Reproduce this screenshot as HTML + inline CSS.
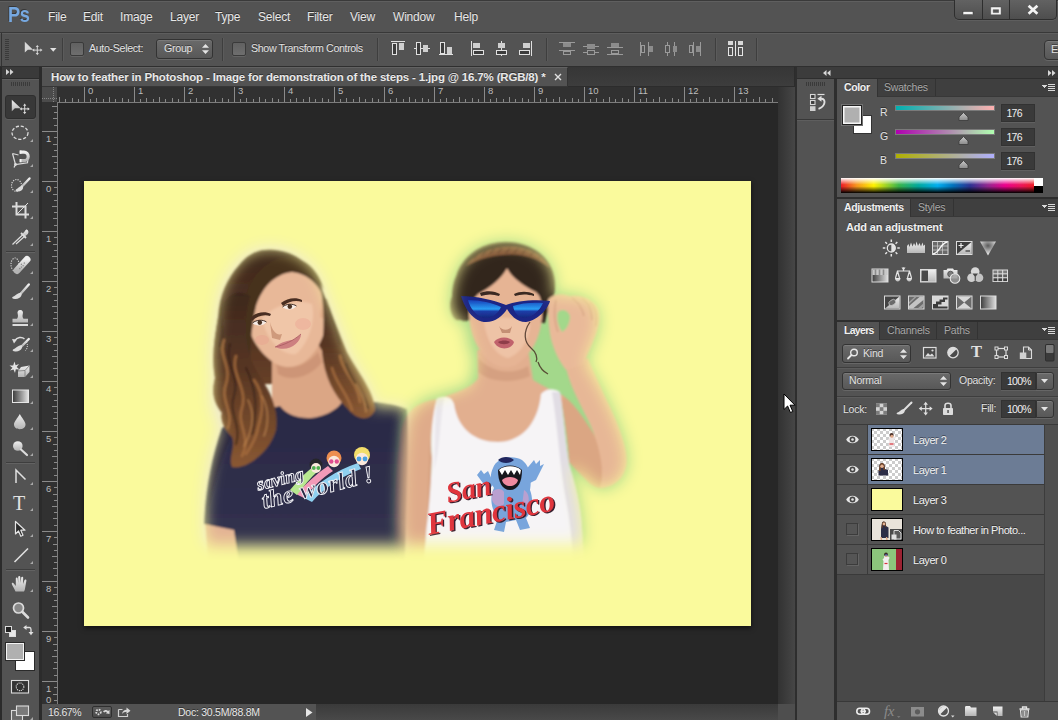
<!DOCTYPE html>
<html lang="en">
<head>
<meta charset="utf-8">
<title>Photoshop</title>
<style>
*{box-sizing:border-box;margin:0;padding:0}
html,body{width:1058px;height:720px;overflow:hidden;background:#535353}
body{font-family:"Liberation Sans",sans-serif;font-size:11px;color:#e2e2e2;position:relative}
.a{position:absolute}
.t{position:absolute;white-space:nowrap;line-height:1;text-shadow:0 -1px 0 rgba(0,0,0,.45)}
svg{position:absolute;overflow:visible}
/* ---------- menu bar ---------- */
#menubar{left:0;top:0;width:1058px;height:33px;background:#535353;border-top:1px solid #3a3a3a;border-bottom:1px solid #383838}
#menubar .hl{left:0;top:0;width:1058px;height:1px;background:#5f5f5f}
.menu{font-size:12px;top:11px;color:#e8e8e8;letter-spacing:-.2px}
/* ---------- options bar ---------- */
#optbar{left:0;top:33px;width:1058px;height:34px;background:#535353;border-top:1px solid #5e5e5e;border-bottom:1px solid #2f2f2f}
.vsep{width:1px;background:#3e3e3e;box-shadow:1px 0 0 #5b5b5b}
.chk{width:13px;height:13px;border:1px solid #3a3a3a;border-radius:2px;background:linear-gradient(#616161,#6e6e6e);box-shadow:0 1px 0 #646464}
/* ---------- doc area ---------- */
#tabbar{left:42px;top:67px;width:753px;height:20px;background:linear-gradient(#363636,#3d3d3d);border-bottom:1px solid #2c2c2c;border-right:1px solid #2c2c2c}
#doctab{left:42px;top:67px;width:526px;height:20px;background:#535353;border-right:1px solid #333;border-top:1px solid #626262;border-bottom:1px solid #363636}
#canvas{left:57px;top:102px;width:721px;height:602px;background:#272727}
#hruler{left:57px;top:87px;width:721px;height:16px;background:#313131;border-bottom:1px solid #7c7c7c}
#vruler{left:42px;top:102px;width:16px;height:602px;background:#313131;border-right:1px solid #7c7c7c}
#rcorner{left:42px;top:87px;width:15px;height:15px;background:#4b4b4b}
.rn{position:absolute;font-size:9.5px;color:#bcbcbc;line-height:1}
#vscroll{left:778px;top:87px;width:17px;height:617px;background:linear-gradient(90deg,#323232,#464646)}
#hscroll{left:316px;top:704px;width:462px;height:16px;background:linear-gradient(#3a3a3a,#494949)}
#scorner{left:778px;top:704px;width:17px;height:16px;background:#4e4e4e}
#status{left:42px;top:704px;width:274px;height:16px;background:#535353}
/* ---------- toolbar ---------- */
#tools{left:0;top:67px;width:42px;height:653px;background:#2b2b2b}
#toolhead{left:2px;top:67px;width:37px;height:11px;background:#3a3a3a}
#toolbody{left:2px;top:79px;width:37px;height:641px;background:#535353;border-top:1px solid #5e5e5e}
/* ---------- right column ---------- */
#rgap{left:795px;top:67px;width:263px;height:653px;background:#2e2e2e}
#rhead{left:797px;top:67px;width:261px;height:11px;background:#3c3c3c}
#iconcol{left:797px;top:79px;width:37px;height:641px;background:#535353}
.panel{background:#535353}
.tabrow{background:#3f3f3f;border-bottom:1px solid #383838}
.ptab{position:absolute;top:0;height:17px;font-size:10.5px;letter-spacing:-.2px;line-height:16px;padding:0 7px;color:#a8a8a8;border-right:1px solid #333;text-shadow:0 -1px 0 rgba(0,0,0,.4)}
.ptab.on{background:#535353;color:#f0f0f0;font-weight:bold;height:18px;letter-spacing:-.35px}
.vbox{position:absolute;background:#3a3a3a;border:1px solid #323232;box-shadow:0 1px 0 #606060;color:#f0f0f0;font-size:10.5px;letter-spacing:-.75px;line-height:16px;padding-left:6px}
.dd{position:absolute;border:1px solid #333;border-radius:3px;background:linear-gradient(#6a6a6a,#585858);box-shadow:0 1px 0 #666,inset 0 1px 0 #7a7a7a;color:#f0f0f0;font-size:11px}
</style>
</head>
<body>
<!-- MENU BAR -->
<div id="menubar" class="a"><div class="a hl"></div></div>
<div class="t" style="left:8px;top:4px;font-size:22px;font-weight:bold;color:#76a8e0;letter-spacing:-.3px;text-shadow:-1px -1px 0 rgba(0,0,0,.35);transform:scaleX(.825);transform-origin:left">Ps</div>
<div class="t menu" style="left:48px">File</div>
<div class="t menu" style="left:83px">Edit</div>
<div class="t menu" style="left:120px">Image</div>
<div class="t menu" style="left:170px">Layer</div>
<div class="t menu" style="left:215px">Type</div>
<div class="t menu" style="left:258px">Select</div>
<div class="t menu" style="left:307px">Filter</div>
<div class="t menu" style="left:350px">View</div>
<div class="t menu" style="left:393px">Window</div>
<div class="t menu" style="left:454px">Help</div>
<div class="a" style="left:954px;top:0;width:103px;height:20px;border:1px solid #2e2e2e;border-top:none;border-radius:0 0 5px 5px;background:linear-gradient(#626262,#4e4e4e);box-shadow:0 1px 0 #5e5e5e"></div>
<div class="a" style="left:982px;top:0;width:1px;height:19px;background:#2e2e2e"></div>
<div class="a" style="left:1009px;top:0;width:1px;height:19px;background:#2e2e2e"></div>
<svg style="left:954px;top:0" width="103" height="20" viewBox="954 0 103 20"><rect x="963" y="11.500" width="10" height="3.200" fill="#f4f4f4" stroke="#333" stroke-width=".5"/><path d="M990.700 7H1001.100V14.800H990.700ZM993.200 9.700V12.600H998.600V9.700Z" fill="#f4f4f4" fill-rule="evenodd" stroke="#333" stroke-width=".4"/><path d="M1028.600 5.800L1037.400 13.800M1037.400 5.800L1028.600 13.800" stroke="#f4f4f4" stroke-width="2.700" fill="none"/></svg>

<!-- OPTIONS BAR -->
<div id="optbar" class="a"></div>
<div class="a" style="left:1px;top:33px;width:1px;height:33px;background:#333"></div>
<svg style="left:5px;top:39px" width="5" height="22" shape-rendering="crispEdges"><path d="M0 .5H4M0 2.500H4M0 4.500H4M0 6.500H4M0 8.500H4M0 10.500H4M0 12.500H4M0 14.500H4M0 16.500H4M0 18.500H4M0 20.500H4" stroke="#3a3a3a" stroke-width="1"/></svg>
<svg style="left:24px;top:40px" width="20" height="17" viewBox="24 40 20 17"><path d="M24.800 41.800L24.800 52.600L27.800 49.800L33 49.800Z" fill="#d8d8d8"/><path d="M37.300 46.500V53.700M33.700 50.100H40.900" stroke="#d6d6d6" stroke-width="1" fill="none"/><path d="M37.300 44.900L38.900 47.100H35.700ZM37.300 55.300L38.900 53.100H35.700ZM32.100 50.100L34.300 48.500V51.700ZM42.500 50.100L40.300 48.500V51.700Z" fill="#d6d6d6"/></svg>
<svg style="left:50px;top:48px" width="7" height="4"><path d="M0 0H6.500L3.250 3.800Z" fill="#e0e0e0"/></svg>
<div class="a vsep" style="left:62px;top:38px;height:23px"></div>
<div class="a chk" style="left:70px;top:42px;width:14px;height:14px"></div>
<div class="t" style="left:89px;top:43px;font-size:10.7px;letter-spacing:-.35px">Auto-Select:</div>
<div class="dd" style="left:156px;top:39px;width:57px;height:20px"></div>
<div class="t" style="left:164px;top:43px;font-size:10.7px;letter-spacing:-.3px">Group</div>
<svg style="left:202px;top:44px" width="7" height="10"><path d="M0 3.800L3.500 0L7 3.800ZM0 6.200L3.500 10L7 6.200Z" fill="#e4e4e4"/></svg>
<div class="a vsep" style="left:222px;top:38px;height:23px"></div>
<div class="a chk" style="left:232px;top:42px;width:14px;height:14px"></div>
<div class="t" style="left:251px;top:43px;font-size:10.7px;letter-spacing:-.38px">Show Transform Controls</div>
<div class="a vsep" style="left:377px;top:38px;height:23px"></div>
<!-- align icons -->
<svg style="left:391px;top:41px" width="145" height="15" viewBox="391 41 145 15" shape-rendering="crispEdges" fill="#3c3c3c" stroke="#e0e0e0" stroke-width="1">
<path d="M391 41.500H405"/><rect x="392.500" y="43.500" width="4" height="11"/><rect x="399" y="43" width="5" height="7" fill="#cfcfcf" stroke="none"/>
<path d="M414 48.500H430"/><rect x="416.500" y="42.500" width="4" height="12" fill="#3c3c3c"/><rect x="423" y="45" width="5" height="7" fill="#cfcfcf" stroke="none"/>
<path d="M439 54.500H453"/><rect x="440.500" y="42.500" width="4" height="11"/><rect x="447" y="47" width="5" height="7" fill="#cfcfcf" stroke="none"/>
<path d="M471.500 41V56"/><rect x="473" y="43" width="7" height="5" fill="#cfcfcf" stroke="none"/><rect x="473.500" y="50.500" width="10" height="4"/>
<path d="M501.500 41V56"/><rect x="498" y="43" width="7" height="5" fill="#cfcfcf" stroke="none"/><rect x="496.500" y="50.500" width="10" height="4" fill="#3c3c3c"/>
<path d="M531.500 41V56"/><rect x="523" y="43" width="7" height="5" fill="#cfcfcf" stroke="none"/><rect x="519.500" y="50.500" width="10" height="4"/>
</svg>
<div class="a vsep" style="left:546px;top:38px;height:23px"></div>
<svg style="left:559px;top:42px" width="145" height="14" viewBox="559 42 145 14" shape-rendering="crispEdges" fill="none" stroke="#9a9a9a" stroke-width="1">
<path d="M559 42.500H575M559 50.500H575"/><rect x="563" y="43" width="8" height="4" fill="#8c8c8c" stroke="none"/><rect x="563.500" y="51.500" width="7" height="3"/>
<path d="M583 46.500H599M583 52.500H599"/><rect x="587" y="44" width="8" height="5" fill="#8c8c8c" stroke="none"/><rect x="587.500" y="50.500" width="7" height="4" fill="#535353"/>
<path d="M607 47.500H623M607 54.500H623"/><rect x="611" y="43" width="8" height="4" fill="#8c8c8c" stroke="none"/><rect x="611.500" y="50.500" width="7" height="3"/>
<path d="M640.500 42V56M648.500 42V56"/><rect x="641.500" y="45.500" width="3" height="7"/><rect x="649" y="46" width="4" height="6" fill="#8c8c8c" stroke="none"/>
<path d="M667.500 42V56M674.500 42V56"/><rect x="665.500" y="45.500" width="4" height="7" fill="#535353"/><rect x="673" y="46" width="4" height="6" fill="#8c8c8c" stroke="none"/>
<path d="M693.500 42V56M700.500 42V56"/><rect x="689.500" y="45.500" width="3" height="7"/><rect x="696" y="46" width="4" height="6" fill="#8c8c8c" stroke="none"/>
</svg>
<div class="a vsep" style="left:715px;top:38px;height:23px"></div>
<svg style="left:727px;top:40px" width="17" height="17" viewBox="0 0 17 17" shape-rendering="crispEdges"><rect x="1" y="1" width="5" height="4" fill="#d8d8d8"/><rect x="11" y="1" width="5" height="4" fill="#d8d8d8"/><rect x="1.500" y="7.500" width="4" height="8" fill="none" stroke="#e6e6e6"/><rect x="11.500" y="7.500" width="4" height="8" fill="none" stroke="#e6e6e6"/><path d="M8.500 1V16" stroke="#e6e6e6"/></svg>
<div class="a vsep" style="left:756px;top:38px;height:23px"></div>
<div class="dd" style="left:1044px;top:40px;width:20px;height:20px;border-radius:4px 0 0 4px"></div>
<div class="t" style="left:1051px;top:44px;font-size:11px">E</div>

<!-- DOCUMENT -->
<div id="tabbar" class="a"></div>
<div id="doctab" class="a"></div>
<div class="t" style="left:51px;top:72px;font-size:11.5px;font-weight:bold;color:#e8e8e8;letter-spacing:-.17px">How to feather in Photoshop - Image for demonstration of the steps - 1.jpg @ 16.7% (RGB/8) *</div>
<svg id="tabclose" style="left:554px;top:73px" width="8" height="8"><path d="M1 1L7 7M7 1L1 7" stroke="#e0e0e0" stroke-width="1.400"/></svg>
<div id="canvas" class="a"></div>
<svg class="a" style="left:84px;top:181px;overflow:hidden;box-shadow:0 2px 5px rgba(0,0,0,.6)" width="667" height="445" viewBox="84 181 667 445">
<defs>
<filter id="b9" x="-20%" y="-20%" width="140%" height="140%"><feGaussianBlur stdDeviation="7.5"/></filter>
<filter id="b3" x="-20%" y="-20%" width="140%" height="140%"><feGaussianBlur stdDeviation="3"/></filter>
<filter id="b1" x="-20%" y="-20%" width="140%" height="140%"><feGaussianBlur stdDeviation="1"/></filter>
<filter id="b05" x="-20%" y="-20%" width="140%" height="140%"><feGaussianBlur stdDeviation=".55"/></filter>
<mask id="m1" maskUnits="userSpaceOnUse" x="84" y="181" width="667" height="445">
<path filter="url(#b9)" fill="#fff" d="M262 248C292 244 318 263 325 292C333 312 342 334 348 352C358 372 374 390 375 408C385 404 398 405 407 409C410 440 408 500 405 545L206 545C201 510 207 460 220 428C209 410 210 390 213 378C209 356 213 336 216 317C217 296 225 276 237 263C245 254 252 250 262 248Z"/>
</mask>
<mask id="m2" maskUnits="userSpaceOnUse" x="84" y="181" width="667" height="445">
<path filter="url(#b9)" fill="#fff" d="M502 242C530 240 552 256 555 281C556 290 553 295 552 297C560 293 572 293 582 297C594 301 602 310 598 330C594 345 588 355 586 362C592 372 598 382 603 392C615 415 628 445 627 462C626 480 612 490 598 489C590 482 580 472 571 466C576 486 581 506 582 526L583 544L403 544C400 520 400 505 401 498C401 470 403 450 405 438C406 420 410 410 424 400C440 394 458 390 470 385L475 360C468 345 466 335 467 325C458 322 452 315 451 308C450 295 452 284 456 275C462 256 480 243 502 242Z"/>
</mask>
<linearGradient id="lens" x1="0" y1="0" x2="0" y2="1"><stop offset="0" stop-color="#173fb8"/><stop offset=".5" stop-color="#2aa0f4"/><stop offset=".62" stop-color="#1d3ea8"/><stop offset="1" stop-color="#17277e"/></linearGradient>
<linearGradient id="hairL" x1="0" y1="0" x2="0" y2="1"><stop offset="0" stop-color="#3d281e"/><stop offset=".45" stop-color="#583623"/><stop offset="1" stop-color="#8a5832"/></linearGradient>
<linearGradient id="shirtF" x1="0" y1="0" x2="0" y2="1"><stop offset="0" stop-color="#2a2944"/><stop offset="1" stop-color="#323250"/></linearGradient>
</defs>
<rect x="84" y="181" width="667" height="445" fill="#fafa9c"/>
<!-- ===== left woman (front) ===== -->
<g mask="url(#m1)">
<rect x="190" y="225" width="230" height="350" fill="#efe9d4"/>
<g filter="url(#b1)">
<!-- hair back mass -->
<path fill="url(#hairL)" d="M262 250C290 246 316 264 323 292C331 312 340 334 346 352C356 372 372 392 372 410C366 420 356 416 350 406C344 396 338 390 332 384L262 384C262 400 268 420 262 436C256 452 240 470 232 466C228 456 236 446 232 436C224 428 220 420 222 412C212 400 212 390 215 378C211 356 215 336 218 317C219 296 227 278 239 265C246 256 253 252 262 250Z"/>
<!-- arm below sleeve -->
<path fill="#e3b394" d="M205 522L234 528L238 560L208 560Z"/>
<!-- neck -->
<path fill="#dba685" d="M272 352L318 344L350 398C334 426 290 428 272 408Z"/>
<path fill="#c78f70" opacity=".7" d="M276 362C290 372 306 366 318 352L322 362C310 378 290 382 278 374Z"/>
<!-- shirt -->
<path fill="url(#shirtF)" d="M280 406C262 410 236 418 222 428C210 460 205 496 204 524L234 530L238 560L405 560C407 500 410 440 407 409C394 404 380 402 372 402C362 398 352 398 344 398C340 410 322 418 308 418C296 418 286 414 280 406Z"/>
<path fill="#22213a" opacity=".7" d="M222 428C214 450 210 480 208 510C216 480 222 455 232 436ZM400 412C404 440 404 480 402 520L405 520C407 480 409 440 407 409Z"/>
<!-- face (tilted) -->
<path fill="#e8b898" d="M248 312C250 288 272 272 292 272C312 274 326 292 326 312C328 332 318 352 304 362C292 370 280 368 270 360C256 348 246 332 248 312Z"/>
<path fill="#f0c6a8" d="M262 318C272 306 298 298 312 304C316 322 308 344 296 354C282 356 266 340 262 318Z"/>
<!-- ear -->
<path fill="#dfa888" d="M322 300C328 298 330 306 328 314C326 320 322 320 320 316Z"/>
<!-- hair front (fringe sweep) -->
<path fill="#47301f" d="M244 318C242 290 256 266 280 258C300 254 318 266 324 290C318 278 306 272 292 272C274 274 262 288 256 306C252 324 250 344 250 364C244 350 244 334 244 318Z"/>
<!-- front locks -->
<path fill="url(#hairL)" d="M250 296C242 326 246 350 254 366C264 384 280 402 276 430C270 452 246 470 232 467C228 457 236 447 232 437C224 429 220 421 222 413C212 401 212 390 215 378C211 356 215 336 218 317C222 298 236 286 250 296Z"/>
<path fill="url(#hairL)" d="M320 286C330 310 340 334 347 352C358 372 375 392 375 410C369 423 356 419 348 409C334 396 324 376 322 352C324 330 325 308 320 286Z"/>
<!-- highlights / waves -->
<path fill="none" stroke="#a86e3e" stroke-width="2.600" stroke-linecap="round" opacity=".8" d="M224 340C218 356 232 366 226 384C220 400 234 412 228 428M236 356C230 374 248 388 242 408C236 424 252 438 242 456M254 380C266 396 262 414 258 428C256 440 250 448 246 454M340 356C342 372 358 382 360 402M332 368C336 384 348 394 352 410"/>
<path fill="none" stroke="#2e1d15" stroke-width="2.200" stroke-linecap="round" opacity=".6" d="M230 344C224 362 240 376 234 396C228 412 242 426 236 444M246 368C256 388 258 408 252 434M222 300C218 318 226 330 220 346M346 364C350 380 364 392 368 408M326 300C332 316 336 330 340 344"/>
<path fill="none" stroke="#c48a52" stroke-width="1.500" stroke-linecap="round" opacity=".7" d="M248 400C256 416 252 432 244 446M262 396C270 410 268 426 264 436M356 384C362 394 366 402 366 412"/>
</g>
<g filter="url(#b05)">
<!-- brows / eyes / nose / lips -->
<path fill="#4a2f22" d="M250 318C256 312 265 311 271 314L270 316C264 314 257 316 252 321ZM281 303C287 298 296 297 302 300L302 302C296 300 289 301 283 306Z"/>
<path fill="#f6ece6" d="M252.500 323C256.500 319.500 263 319.500 266.500 322C263 326.500 256 326.500 252.500 323ZM282.500 307C286.500 303.500 293 303.500 296.500 306C293 310.500 286 310.500 282.500 307Z"/><circle cx="259.800" cy="322.600" r="2.300" fill="#4a3020"/><circle cx="289.800" cy="306.600" r="2.300" fill="#4a3020"/><path fill="none" stroke="#2e1e18" stroke-width=".9" d="M252.500 323C256.500 319.500 263 319.500 266.500 322M282.500 307C286.500 303.500 293 303.500 296.500 306"/><ellipse cx="303" cy="324" rx="8" ry="6" fill="#e88f86" opacity=".28"/><ellipse cx="262" cy="340" rx="7" ry="5" fill="#e88f86" opacity=".25"/>
<path fill="#cf9a7c" d="M270 322C272 330 276 336 282 334L280 340L272 338Z"/>
<path fill="#cd7f80" d="M275 347C281 342 289 340 293 340C296 338 299 336 301 334C301 343 288 353 275 347Z"/><path fill="none" stroke="#a85a60" stroke-width=".8" d="M275 347C284 345 293 341 301 334"/>
<!-- print rainbow + characters -->
<path fill="#f29ab8" d="M296 494C306 484 316 474 328 466L333 471C322 478 312 488 304 498Z"/>
<path fill="#8fd0f0" d="M304 498C316 484 336 470 358 463L361 469C342 476 324 488 312 502Z"/>
<path fill="#b8e890" d="M290 490C298 480 306 472 314 466L318 471C310 478 304 486 297 495Z"/>
<circle cx="334" cy="458" r="7.500" fill="#ee8f50"/><circle cx="334" cy="461.500" r="5.800" fill="#fbe9dc"/><circle cx="331.300" cy="461.500" r="2.200" fill="#e05090"/><circle cx="336.800" cy="461.500" r="2.200" fill="#e05090"/>
<circle cx="362" cy="455" r="8" fill="#f3de6a"/><circle cx="362" cy="459" r="6.200" fill="#fbe9dc"/><circle cx="359" cy="459" r="2.400" fill="#4aa0e0"/><circle cx="365" cy="459" r="2.400" fill="#4aa0e0"/>
<circle cx="316" cy="465" r="6.500" fill="#26262c"/><circle cx="316" cy="468" r="5" fill="#fbe9dc"/><circle cx="313.800" cy="468" r="1.900" fill="#50b050"/><circle cx="318.300" cy="468" r="1.900" fill="#50b050"/>
</g>
<g font-family="'Liberation Serif',serif" font-style="italic" font-weight="bold" fill="#2a2944" stroke="#f4f4f8" stroke-width=".9" transform="rotate(-14 318 486)">
<text x="259" y="476" font-size="18">saving</text>
<text x="260" y="495" font-size="24" letter-spacing=".6">the world !</text>
</g>
</g>
<!-- ===== right woman (behind) ===== -->
<g mask="url(#m2)">
<rect x="380" y="220" width="290" height="360" fill="#a3d88b"/>
<g filter="url(#b1)">
<!-- her right arm (our left) -->
<path fill="#dfab8a" d="M438 399C418 401 404 410 400 434C395 470 393 510 394 560L430 560C430 510 431 480 432 458C430 440 432 420 438 399Z"/><path fill="#cf9877" opacity=".5" d="M430 440C428 470 428 520 427 560L430 560C430 510 431 480 432 458Z"/>
<!-- raised arm: upper arm + forearm -->
<path fill="#dba683" d="M560 394C572 400 584 418 596 438C608 456 618 468 612 482C604 492 596 488 590 484C582 476 574 468 569 462C568 440 564 415 560 394Z"/>
<path fill="#e7b796" d="M566 368L588 358C594 372 600 384 604 394C616 418 628 446 627 462C626 478 614 488 600 488C606 470 598 440 588 420C578 400 570 385 566 368Z"/>
<!-- neck/chest -->
<path fill="#e2af8f" d="M477 350L529 354L533 380C546 388 556 392 564 396L548 440C524 452 480 452 458 432L436 400C455 392 472 388 478 378Z"/>
<path fill="#d09a7b" opacity=".7" d="M478 358C490 372 512 376 528 366L530 376C512 384 490 382 478 372Z"/>
<!-- tank -->
<path fill="#f6f4f6" d="M437 398C446 395 452 397 454 404C458 430 476 442 498 442C520 442 538 425 541 394C546 388 554 388 560 392C564 420 566 445 569 464C576 486 581 506 582 526L584 560L424 560C426 540 426 530 427 524C430 500 431 480 432 458C430 440 432 415 437 398Z"/>
<path fill="#dad6de" opacity=".75" d="M552 392C558 430 560 470 566 500C570 520 572 540 573 560L584 560L582 526C581 506 576 486 569 464C566 445 564 420 560 392Z"/>
<path fill="#e6e2e8" opacity=".8" d="M437 398C434 420 436 450 434 470C440 450 440 420 444 398Z"/>
<!-- hair -->
<path fill="#33251f" d="M502 242C530 240 553 257 555 281C556 292 553 302 549 308C547 314 546 318 545 323L540 323C540 316 538 312 536 310L472 318C467 323 460 322 456 316C450 305 451 286 456 276C462 256 480 243 502 242Z"/>
<!-- face -->
<path fill="#e6b494" d="M470 302C472 284 494 268 510 268C532 270 544 294 542 318C540 340 530 356 516 365C502 371 489 364 481 352C471 338 467 320 470 302Z"/>
<path fill="#eec3a6" d="M484 322C492 316 520 316 530 324C530 340 520 354 508 358C496 356 486 340 484 322Z"/>
<!-- hair front sweeps -->
<path fill="#33251f" d="M507 268C502 278 490 288 478 294C474 298 472 302 470 306C464 296 464 282 470 272C480 260 496 257 507 268ZM507 268C512 278 524 286 536 292C540 296 542 300 544 306C550 294 548 280 542 272C532 260 518 257 507 268Z"/>
<path fill="#8b5b3c" opacity=".9" d="M466 266C476 251 498 245 516 247C532 249 544 256 550 268C538 258 524 254.500 512 254.500C496 254.500 480 258 466 266Z"/><path fill="none" stroke="#3a271e" stroke-width="1" opacity=".8" d="M474 259L478 254M482 256L486 251M490 254L494 249M498 253L502 248M506 253L510 248M514 253L518 248.500M522 254L526 249.500M530 256L534 251.500M538 259L542 255"/>
<path fill="#33251f" d="M452 296C458 290 466 294 466 304C466 314 462 322 456 320C450 316 448 304 452 296Z"/>
<!-- hand -->
<path fill="#e9b999" d="M548 300C552 294 562 293 570 296C580 294 592 298 598 308C602 318 598 330 594 340C590 350 586 358 584 364L566 370C558 360 552 346 550 334C548 322 548 310 548 300Z"/>
<path fill="#a3d88b" d="M558 312C562 308 568 310 570 316C570 324 566 330 562 332C558 326 556 318 558 312Z"/><path fill="none" stroke="#c48e70" stroke-width="1" opacity=".8" d="M572 298C578 302 582 308 584 316M582 298C590 304 592 312 592 320M590 302C596 308 598 316 596 326M556 300C554 310 554 322 558 332"/>
</g>
<g filter="url(#b05)">
<!-- loose strand -->
<path fill="none" stroke="#4a3428" stroke-width="1.300" opacity=".85" d="M530 322C523 332 524 342 531 348C536 352 538 358 536 362M538 362C540 368 544 372 548 374"/>
<!-- sunglasses -->
<path fill="#1b2585" d="M461 296C476 296 494 300 506 305C516 301 534 299 550 301C549 306 540 320 526 322C516 322 510 314 507 309C503 316 494 323 484 322C471 320 464 306 461 296Z"/>
<path fill="url(#lens)" d="M468 300C480 300 493 303 501 307C498 314 491 319 484 318C476 316 470 308 468 300ZM513 306C521 303 533 302 543 303C540 310 533 317 525 318C518 318 514 312 513 306Z"/>
<!-- brows, nose, lips -->
<path fill="#3a2a22" d="M480 293C487 290 495 291 500 294L499 296C493 294 487 294 481 296ZM514 294C520 291 528 291 534 294L534 296C527 294 521 294 515 296Z"/>
<path fill="#c48f74" d="M499 326C502 331 509 331 512 326L510 333L502 333Z"/>
<path fill="#c0626c" d="M494 342C498 336 510 336 514 342C512 350 498 351 494 342Z"/>
<path fill="#8e3c48" d="M498 342C502 340 507 340 510 342C508 345 500 345 498 342Z"/>
</g>
<!-- print: Stitch -->
<g filter="url(#b05)" transform="translate(0 2)">
<path fill="#78a5dc" d="M493 466C496 456 512 452 522 458C530 464 532 476 530 488C534 498 532 510 526 516L530 526L520 528L516 518L506 520L504 530L494 528L498 516C490 506 490 494 494 486C490 480 490 472 493 466Z"/>
<path fill="#78a5dc" d="M477 473L481 468L484 472L488 469L494 482L488 488ZM524 470L534 458L536 462L540 458L540 464L544 462L536 478L528 482Z"/>
<path fill="#b9a0d0" d="M492 490C496 486 502 486 504 490L504 502C500 506 494 504 492 498ZM524 488C528 490 530 496 528 502L522 504Z"/>
<path fill="#20285e" d="M498 458C502 454 510 454 514 458C510 462 502 462 498 458Z"/>
<path fill="#16161e" d="M498 468C504 462 516 462 522 468C522 480 518 488 510 488C502 488 498 480 498 468Z"/>
<path fill="#fff" d="M499 468L502 473L505 468L508 473L511 468L514 473L517 468L520 473L521 468C516 463 504 463 499 468Z"/>
<path fill="#ef8aa0" d="M502 478C506 474 514 474 518 478C516 486 504 486 502 478Z"/>
</g>
<g font-family="'Liberation Serif',serif" font-style="italic" font-weight="bold" transform="rotate(-11 490 515)">
<text x="452.200" y="496.200" font-size="29" fill="#3a2030" letter-spacing="-.5">San</text>
<text x="451" y="495" font-size="29" fill="#e0353d" letter-spacing="-.5">San</text>
<text x="427.200" y="524.200" font-size="32" fill="#3a2030" letter-spacing="-.4">Francisco</text>
<text x="426" y="523" font-size="32" fill="#e0353d" letter-spacing="-.4">Francisco</text>
</g>
</g>
</svg>

<div id="hruler" class="a"></div>
<div id="vruler" class="a"></div>
<div id="rcorner" class="a"></div>
<svg class="a" style="left:57px;top:87px" width="721" height="16" viewBox="57 87 721 16" shape-rendering="crispEdges"><path d="M59.5 97V102M65.5 99V102M72.5 98V102M78.5 99V102M84.5 87V102M90.5 99V102M96.5 98V102M103.5 99V102M109.5 97V102M115.5 99V102M122.5 98V102M128.5 99V102M134.5 87V102M140.5 99V102M146.5 98V102M153.5 99V102M159.5 97V102M165.5 99V102M172.5 98V102M178.5 99V102M184.5 87V102M190.5 99V102M196.5 98V102M203.5 99V102M209.5 97V102M215.5 99V102M222.5 98V102M228.5 99V102M234.5 87V102M240.5 99V102M246.5 98V102M253.5 99V102M259.5 97V102M265.5 99V102M272.5 98V102M278.5 99V102M284.5 87V102M290.5 99V102M296.5 98V102M303.5 99V102M309.5 97V102M315.5 99V102M322.5 98V102M328.5 99V102M334.5 87V102M340.5 99V102M346.5 98V102M353.5 99V102M359.5 97V102M365.5 99V102M372.5 98V102M378.5 99V102M384.5 87V102M390.5 99V102M396.5 98V102M403.5 99V102M409.5 97V102M415.5 99V102M422.5 98V102M428.5 99V102M434.5 87V102M440.5 99V102M446.5 98V102M453.5 99V102M459.5 97V102M465.5 99V102M472.5 98V102M478.5 99V102M484.5 87V102M490.5 99V102M496.5 98V102M503.5 99V102M509.5 97V102M515.5 99V102M522.5 98V102M528.5 99V102M534.5 87V102M540.5 99V102M546.5 98V102M553.5 99V102M559.5 97V102M565.5 99V102M572.5 98V102M578.5 99V102M584.5 87V102M590.5 99V102M596.5 98V102M603.5 99V102M609.5 97V102M615.5 99V102M622.5 98V102M628.5 99V102M634.5 87V102M640.5 99V102M646.5 98V102M653.5 99V102M659.5 97V102M665.5 99V102M672.5 98V102M678.5 99V102M684.5 87V102M690.5 99V102M696.5 98V102M703.5 99V102M709.5 97V102M715.5 99V102M722.5 98V102M728.5 99V102M734.5 87V102M740.5 99V102M746.5 98V102M753.5 99V102M759.5 97V102M765.5 99V102M772.5 98V102" stroke="#8a8a8a" stroke-width="1" fill="none"/></svg>
<div class="rn" style="left:88px;top:86px">0</div>
<div class="rn" style="left:138px;top:86px">1</div>
<div class="rn" style="left:188px;top:86px">2</div>
<div class="rn" style="left:238px;top:86px">3</div>
<div class="rn" style="left:288px;top:86px">4</div>
<div class="rn" style="left:338px;top:86px">5</div>
<div class="rn" style="left:388px;top:86px">6</div>
<div class="rn" style="left:438px;top:86px">7</div>
<div class="rn" style="left:488px;top:86px">8</div>
<div class="rn" style="left:538px;top:86px">9</div>
<div class="rn" style="left:588px;top:86px">10</div>
<div class="rn" style="left:638px;top:86px">11</div>
<div class="rn" style="left:688px;top:86px">12</div>
<div class="rn" style="left:738px;top:86px">13</div>
<svg class="a" style="left:42px;top:102px" width="16" height="602" viewBox="42 102 16 602" shape-rendering="crispEdges"><path d="M52 106.5H57M54 112.5H57M53 118.5H57M54 125.5H57M42 131.5H57M54 137.5H57M53 144.5H57M54 150.5H57M52 156.5H57M54 162.5H57M53 168.5H57M54 175.5H57M42 181.5H57M54 187.5H57M53 194.5H57M54 200.5H57M52 206.5H57M54 212.5H57M53 218.5H57M54 225.5H57M42 231.5H57M54 237.5H57M53 244.5H57M54 250.5H57M52 256.5H57M54 262.5H57M53 268.5H57M54 275.5H57M42 281.5H57M54 287.5H57M53 294.5H57M54 300.5H57M52 306.5H57M54 312.5H57M53 318.5H57M54 325.5H57M42 331.5H57M54 337.5H57M53 344.5H57M54 350.5H57M52 356.5H57M54 362.5H57M53 368.5H57M54 375.5H57M42 381.5H57M54 387.5H57M53 394.5H57M54 400.5H57M52 406.5H57M54 412.5H57M53 418.5H57M54 425.5H57M42 431.5H57M54 437.5H57M53 444.5H57M54 450.5H57M52 456.5H57M54 462.5H57M53 468.5H57M54 475.5H57M42 481.5H57M54 487.5H57M53 494.5H57M54 500.5H57M52 506.5H57M54 512.5H57M53 518.5H57M54 525.5H57M42 531.5H57M54 537.5H57M53 544.5H57M54 550.5H57M52 556.5H57M54 562.5H57M53 568.5H57M54 575.5H57M42 581.5H57M54 587.5H57M53 594.5H57M54 600.5H57M52 606.5H57M54 612.5H57M53 618.5H57M54 625.5H57M42 631.5H57M54 637.5H57M53 644.5H57M54 650.5H57M52 656.5H57M54 662.5H57M53 668.5H57M54 675.5H57M42 681.5H57M54 687.5H57M53 694.5H57M54 700.5H57" stroke="#8a8a8a" stroke-width="1" fill="none"/></svg>
<div class="rn" style="left:46px;top:134px">1</div>
<div class="rn" style="left:46px;top:184px">0</div>
<div class="rn" style="left:46px;top:234px">1</div>
<div class="rn" style="left:46px;top:284px">2</div>
<div class="rn" style="left:46px;top:334px">3</div>
<div class="rn" style="left:46px;top:384px">4</div>
<div class="rn" style="left:46px;top:434px">5</div>
<div class="rn" style="left:46px;top:484px">6</div>
<div class="rn" style="left:46px;top:534px">7</div>
<div class="rn" style="left:46px;top:584px">8</div>
<div class="rn" style="left:46px;top:634px">9</div>
<div class="rn" style="left:46px;top:684px">1</div><div class="rn" style="left:46px;top:695px">0</div>
<svg class="a" style="left:42px;top:87px" width="15" height="15"><path d="M11.500 0V15M0 11.500H15" stroke="#858585" stroke-width="1" stroke-dasharray="1 1" fill="none" shape-rendering="crispEdges"/></svg>
<div id="vscroll" class="a"></div>
<div id="hscroll" class="a"></div>
<div id="scorner" class="a"></div>
<div id="status" class="a"></div>
<div class="t" style="left:48px;top:707px;font-size:10.5px;color:#e8e8e8;letter-spacing:-.4px">16.67%</div>
<div class="a" style="left:92px;top:706px;width:20px;height:12px;border:1px solid #2f2f2f;border-radius:2px;background:linear-gradient(#5c5c5c,#4a4a4a)"></div>
<svg style="left:94px;top:707px" width="17" height="10" viewBox="0 0 17 10"><circle cx="4.500" cy="5" r="2.300" fill="none" stroke="#d8d8d8" stroke-width="1.800" stroke-dasharray="1.500 1"/><path d="M9 4.500C10.500 2.500 13 2.500 14 4L15.500 3L15.500 7L11.800 6.200L13 5.200C12.300 4.300 11 4.500 10.300 5.600Z" fill="#d8d8d8"/></svg>
<svg style="left:117px;top:706px" width="14" height="12" viewBox="0 0 14 12"><path d="M1.500 3.500H5.500M1.500 3.500V10.500H10.500V8" fill="none" stroke="#d0d0d0" stroke-width="1.200"/><path d="M5 8C5.500 5 7.500 3.800 9.500 3.800V1.500L13.500 4.800L9.500 8V5.800C7.800 5.800 6.200 6.500 5 8Z" fill="#d8d8d8"/></svg>
<div class="t" style="left:178px;top:707px;font-size:10.5px;color:#e8e8e8;letter-spacing:-.25px">Doc: 30.5M/88.8M</div>
<svg style="left:306px;top:708px" width="7" height="9"><path d="M0 0L6.500 4.500L0 9Z" fill="#e6e6e6"/></svg>

<!-- TOOLBAR -->
<div id="tools" class="a"></div>
<div id="toolhead" class="a"></div>
<div id="toolbody" class="a"></div>
<svg style="left:6px;top:69px" width="8" height="6"><path d="M0 0L3.500 3L0 6ZM4 0L7.500 3L4 6Z" fill="#d4d4d4"/></svg>
<svg style="left:11px;top:82px" width="19" height="4" shape-rendering="crispEdges"><path d="M.5 0V4M2.500 0V4M4.500 0V4M6.500 0V4M8.500 0V4M10.500 0V4M12.500 0V4M14.500 0V4M16.500 0V4M18.500 0V4" stroke="#3a3a3a"/></svg>
<div class="a" style="left:5px;top:95px;width:31px;height:24px;border-radius:3px;background:#383838;border:1px solid #2e2e2e;box-shadow:0 1px 0 #5e5e5e"></div>
<svg style="left:0;top:67px" width="42" height="653" viewBox="0 67 42 653">
<defs>
<linearGradient id="ig" x1="0" y1="0" x2="0" y2="1"><stop offset="0" stop-color="#efefef"/><stop offset="1" stop-color="#b4b4b4"/></linearGradient>
<linearGradient id="gg" x1="0" y1="0" x2="1" y2="0"><stop offset="0" stop-color="#3a3a3a"/><stop offset="1" stop-color="#e4e4e4"/></linearGradient>
</defs>
<g fill="#a8a8a8"><path d="M33 139V142H30ZM33 164V167H30ZM33 190V193H30ZM33 216V219H30ZM33 243V246H30ZM33 271V274H30ZM33 297V300H30ZM33 323V326H30ZM33 349V352H30ZM33 375V378H30ZM33 401V404H30ZM33 427V430H30ZM33 453V456H30ZM33 482V485H30ZM33 508V511H30ZM33 534V537H30ZM33 561V564H30ZM33 589V592H30ZM33 717V720H30Z"/></g>
<g stroke="#3e3e3e" stroke-width="1" shape-rendering="crispEdges"><path d="M6 251.500H35M6 462.500H35M6 569.500H35"/></g>
<g stroke="#626262" stroke-width="1" shape-rendering="crispEdges"><path d="M6 252.500H35M6 463.500H35M6 570.500H35"/></g>
<!-- move -->
<path d="M11.800 99.800L11.800 111.300L14.900 108.300L20.800 108.300Z" fill="url(#ig)"/>
<path d="M24.700 105.200V112.600M21 108.900H28.400" stroke="#dcdcdc" stroke-width="1" fill="none"/>
<path d="M24.700 103.600L26.300 105.800H23.100ZM24.700 114.200L26.300 112H23.100ZM19.600 108.900L21.800 107.300V110.500ZM29.800 108.900L27.600 107.300V110.500Z" fill="#dcdcdc"/>
<!-- elliptical marquee -->
<ellipse cx="20" cy="132.800" rx="8" ry="6.600" fill="none" stroke="#dcdcdc" stroke-width="1.300" stroke-dasharray="3.200 1.800"/>
<!-- magnetic lasso -->
<path d="M12.500 153.500L18.500 155M12.500 153.500L15.500 164.500L27.500 162.800L27.800 160" fill="none" stroke="#dcdcdc" stroke-width="1.200"/>
<path d="M20 152.200H24A4.200 4.200 0 0 1 24 160.600H20" fill="none" stroke="url(#ig)" stroke-width="3.200"/>
<path d="M19.500 150.600H21.500V153.800H19.500ZM19.500 159H21.500V162.200H19.500Z" fill="#f4f4f4"/>
<path d="M15.500 164.500L14 167.500" stroke="#dcdcdc" stroke-width="1.200"/><circle cx="15.500" cy="164.500" r="1.400" fill="#dcdcdc"/>
<!-- quick selection -->
<ellipse cx="16.500" cy="185.500" rx="5" ry="6" fill="none" stroke="#dcdcdc" stroke-width="1.100" stroke-dasharray="1.200 1.200"/>
<path d="M29.500 178.500L22 186.500" stroke="url(#ig)" stroke-width="2.400" stroke-linecap="round"/>
<path d="M22.500 185.500C24 187.500 23 191 18 191.500C16 191.500 15 190.500 16 189.500C18 188.500 19.500 186 22.500 185.500Z" fill="#dcdcdc"/>
<!-- crop -->
<path d="M16.500 202V214.500H29M12 206.500H25.500V218.500" fill="none" stroke="#dcdcdc" stroke-width="2"/>
<path d="M17 214L28 203" stroke="#dcdcdc" stroke-width="1"/>
<!-- eyedropper -->
<path d="M26.800 229.500C28.500 230.200 29 232.500 27.800 234L25 236.500L22.500 234L25 231C25.500 230 26 229.500 26.800 229.500Z" fill="url(#ig)"/>
<path d="M23 234.500L14 243L12.500 244.500M25 236L16 244" stroke="#dcdcdc" stroke-width="1.200" fill="none"/>
<path d="M21 233L26 238" stroke="#dcdcdc" stroke-width="1.800"/>
<!-- spot healing -->
<ellipse cx="15" cy="264.500" rx="4" ry="6.500" fill="none" stroke="#dcdcdc" stroke-width="1.100" stroke-dasharray="1.200 1.200"/>
<path d="M17 270.500L27 259.500" stroke="url(#ig)" stroke-width="7" stroke-linecap="round"/>
<path d="M19.500 269L22 266.500M21 264L23.500 266M24 263.500L25 262" stroke="#777" stroke-width="1.200" stroke-dasharray="1 1.200"/>
<!-- brush -->
<path d="M28.800 284.500L20.500 294" stroke="url(#ig)" stroke-width="2.400" stroke-linecap="round"/>
<path d="M21 292.500C22.500 294.500 21.500 298.500 15.500 299C12.500 299.200 11.500 298 12.500 297C15 296 17.500 292.800 21 292.500Z" fill="#dcdcdc"/>
<!-- stamp -->
<path d="M20.200 310C22.500 310 23.500 312 22.800 314C22.300 315.500 22.500 317.500 23.500 318.800H28V322.500H12.500V318.800H17C18 317.500 18.200 315.500 17.700 314C17 312 18 310 20.200 310Z" fill="url(#ig)"/>
<rect x="12.500" y="324" width="15.500" height="2" fill="#dcdcdc"/>
<!-- history brush -->
<path d="M28.800 339L21.500 346.500" stroke="url(#ig)" stroke-width="2.400" stroke-linecap="round"/>
<path d="M21.500 345C23 347 22 351 16 351.500C13 351.700 12 350.500 13 349.500C15.500 348.500 18 345.300 21.500 345Z" fill="#dcdcdc"/>
<path d="M14.500 341C17 337 22 336.500 24.500 339" fill="none" stroke="#dcdcdc" stroke-width="1.400"/><path d="M12 339L17 339.500L14 343.500Z" fill="#dcdcdc"/>
<path d="M26.500 342C28 345 27.500 348.500 25.500 350.500" fill="none" stroke="#dcdcdc" stroke-width="1" stroke-dasharray="1 1"/>
<!-- magic eraser -->
<path d="M14.500 361.500L15.600 365.200L19 364L16.700 367L19.500 369.500L15.800 369.200L15 373L13.500 369.500L10 370.500L12.500 367.800L9.500 365.500L13.200 365.500Z" fill="#e4e4e4"/>
<path d="M21 367L29.500 365.500L29.500 372L25 377L18 377L18 371Z" fill="url(#ig)"/><path d="M18 371L25 370.500L29.500 365.500M25 370.500V377" stroke="#777" stroke-width=".8" fill="none"/>
<!-- gradient -->
<rect x="12.500" y="390" width="16" height="12.500" fill="url(#gg)" stroke="#e6e6e6" stroke-width="1"/>
<!-- blur drop -->
<path d="M19.800 414C22 418 25.500 421.500 25.500 424.500C25.500 427.500 23 429.200 19.800 429.200C16.600 429.200 14 427.500 14 424.500C14 421.500 17.600 418 19.800 414Z" fill="url(#ig)"/>
<!-- dodge -->
<circle cx="17.800" cy="446" r="4.800" fill="url(#ig)"/><path d="M21 449.500L27 455" stroke="#dcdcdc" stroke-width="2.200" stroke-linecap="round"/>
<!-- convert point / pen -->
<path d="M16 483V470L25.500 479.500" fill="none" stroke="#e0e0e0" stroke-width="1.500"/>
<!-- path select arrow -->
<path d="M15.500 521.500V534L18.500 531L20.800 536.300L23 535.300L20.800 530.200H25Z" fill="#2a2a2a" stroke="#e4e4e4" stroke-width="1.200" stroke-linejoin="round"/>
<!-- line -->
<path d="M14.500 562L28 548.500" stroke="#e0e0e0" stroke-width="1.600"/>
<!-- hand -->
<path d="M15.500 591.500C14.500 589 12.500 586 11.800 584C11.500 582.800 13 582.300 13.800 583.500L15.800 586V578.500C15.800 577.300 17.600 577.300 17.700 578.500L18.200 583V577C18.300 575.800 20.200 575.800 20.300 577L20.600 583L21.200 577.500C21.400 576.300 23.200 576.500 23.200 577.700L23 584L24.500 580C25 579 26.600 579.500 26.400 580.700L25.200 587.500C25 589.500 24.500 590.500 24 591.500Z" fill="url(#ig)"/>
<!-- zoom -->
<circle cx="18.500" cy="608" r="5" fill="#888" stroke="#dcdcdc" stroke-width="1.700"/><path d="M22.500 612L28 617.500" stroke="#dcdcdc" stroke-width="2.600" stroke-linecap="round"/>
<!-- default colours -->
<rect x="9.500" y="630.500" width="6" height="6" fill="#e8e8e8" stroke="#dcdcdc"/><rect x="5.500" y="626.500" width="6" height="6" fill="#222" stroke="#dcdcdc"/>
<!-- swap -->
<path d="M26 627.500H29.500C30.800 627.500 31 628.500 31 629.500V632" fill="none" stroke="#e0e0e0" stroke-width="1.300"/><path d="M23.200 627.500L26.500 625V630ZM31 635.200L28.500 632H33.500Z" fill="#e0e0e0"/>
<!-- fg/bg -->
<rect x="15.500" y="651.500" width="19" height="19" fill="#fff" stroke="#2a2a2a" stroke-width="1"/>
<rect x="5.500" y="642.500" width="19" height="18" fill="#b0b0b0" stroke="#2a2a2a" stroke-width="1"/><rect x="6.500" y="643.500" width="17" height="16" fill="none" stroke="#f4f4f4" stroke-width="1"/>
<!-- quick mask -->
<rect x="11.500" y="680.500" width="17" height="12.500" fill="#333" stroke="#dcdcdc" stroke-width="1.100"/><circle cx="20" cy="686.800" r="3.800" fill="none" stroke="#f0f0f0" stroke-width="1.100" stroke-dasharray="1 1"/>
<!-- screen mode -->
<rect x="11.500" y="710.500" width="11" height="10" fill="#6a6a6a" stroke="#dcdcdc" stroke-width="1.100"/><rect x="16.500" y="706" width="12" height="9.500" fill="#7a7a7a" stroke="#dcdcdc" stroke-width="1.100"/>
</svg>
<div class="t" style="left:13px;top:493px;font-family:'Liberation Serif',serif;font-size:20px;color:#e2e2e2;text-shadow:none">T</div>

<!-- RIGHT -->
<div id="rgap" class="a"></div>
<div id="rhead" class="a"></div>
<div id="iconcol" class="a"></div>
<!-- collapse arrows -->
<svg style="left:823px;top:70px" width="8" height="6"><path d="M3.500 0L0 3L3.500 6ZM7.500 0L4 3L7.500 6Z" fill="#d8d8d8"/></svg>
<svg style="left:1048px;top:70px" width="8" height="6"><path d="M0 0L3.500 3L0 6ZM4 0L7.500 3L4 6Z" fill="#d8d8d8"/></svg>
<!-- icon column -->
<div class="a" style="left:797px;top:119px;width:37px;height:1px;background:#383838"></div>
<div class="a" style="left:797px;top:120px;width:37px;height:1px;background:#5e5e5e"></div>
<svg style="left:806px;top:82px" width="19" height="4" shape-rendering="crispEdges"><path d="M.5 0V4M2.500 0V4M4.500 0V4M6.500 0V4M8.500 0V4M10.500 0V4M12.500 0V4M14.500 0V4M16.500 0V4M18.500 0V4" stroke="#3a3a3a"/></svg>
<svg style="left:808px;top:92px" width="20" height="20" viewBox="808 92 20 20"><rect x="810.500" y="94.500" width="4.500" height="4" fill="#3c3c3c" stroke="#d8d8d8" stroke-width="1.100"/><rect x="810.500" y="100.500" width="4.500" height="4" fill="#3c3c3c" stroke="#d8d8d8" stroke-width="1.100"/><rect x="810" y="106.200" width="5.500" height="4.800" fill="#cfcfcf"/><path d="M817.500 94.500H824.500" stroke="#e0e0e0" stroke-width="1.200"/><path d="M817.300 98.800L821.500 95.800V101.800Z" fill="#e0e0e0"/><path d="M821 98.800C826.500 98.500 825.500 106.500 818.500 108.800" fill="none" stroke="#e0e0e0" stroke-width="1.900"/></svg>
<!-- ===== COLOR PANEL ===== -->
<div class="a panel" style="left:837px;top:79px;width:221px;height:118px"></div>
<div class="a tabrow" style="left:837px;top:79px;width:221px;height:18px"></div>
<div class="ptab on" style="left:837px;top:79px;width:41px">Color</div>
<div class="ptab" style="left:878px;top:79px;width:58px;padding-left:6px">Swatches</div>
<svg style="left:1042px;top:84px" width="13" height="8" shape-rendering="crispEdges"><path d="M0 1H5L2.500 4Z" fill="#d8d8d8"/><path d="M6 .5H13M6 2.500H13M6 4.500H13M6 6.500H13" stroke="#d8d8d8"/></svg>
<div class="a" style="left:853px;top:115px;width:19px;height:19px;background:#fff;border:1px solid #333"></div>
<div class="a" style="left:841px;top:104px;width:22px;height:22px;border:1px solid #707070;background:#535353"></div>
<div class="a" style="left:842px;top:105px;width:20px;height:20px;background:#b0b0b0;border:1px solid #222;box-shadow:inset 0 0 0 1.500px #f6f6f6"></div>
<div class="t" style="left:880px;top:107px;font-size:10.5px">R</div>
<div class="t" style="left:880px;top:131px;font-size:10.5px">G</div>
<div class="t" style="left:880px;top:155px;font-size:10.5px">B</div>
<div class="a" style="left:895px;top:105px;width:100px;height:6px;background:linear-gradient(90deg,#00b0b0,#ffb0b0);border:1px solid #7a7a7a"></div>
<div class="a" style="left:895px;top:129px;width:100px;height:6px;background:linear-gradient(90deg,#b000b0,#b0ffb0);border:1px solid #7a7a7a"></div>
<div class="a" style="left:895px;top:153px;width:100px;height:6px;background:linear-gradient(90deg,#b0b000,#b0b0ff);border:1px solid #7a7a7a"></div>
<svg style="left:958px;top:112px" width="11" height="57"><defs><linearGradient id="th" x1="0" y1="0" x2="0" y2="1"><stop offset="0" stop-color="#c8c8c8"/><stop offset="1" stop-color="#8a8a8a"/></linearGradient></defs><path d="M5.500 .5L10 5V8.500H1V5Z" fill="url(#th)" stroke="#3a3a3a" stroke-width=".8"/><path d="M5.500 24.500L10 29V32.500H1V29Z" fill="url(#th)" stroke="#3a3a3a" stroke-width=".8"/><path d="M5.500 48.500L10 53V56.500H1V53Z" fill="url(#th)" stroke="#3a3a3a" stroke-width=".8"/></svg>
<div class="vbox" style="left:1001px;top:104px;width:34px;height:18px;padding-left:4.500px">176</div>
<div class="vbox" style="left:1001px;top:128px;width:34px;height:18px;padding-left:4.500px">176</div>
<div class="vbox" style="left:1001px;top:152px;width:34px;height:18px;padding-left:4.500px">176</div>
<div class="a" style="left:841px;top:178px;width:193px;height:15px;background:linear-gradient(90deg,#ee1c25 0,#f7941d 8%,#fff200 17%,#39b54a 30%,#00a99d 40%,#00aeef 50%,#0072bc 58%,#2e3192 67%,#92278f 76%,#ec008c 85%,#ed145b 93%,#ee1c25 100%)"></div>
<div class="a" style="left:841px;top:178px;width:193px;height:15px;background:linear-gradient(#fff 0,rgba(255,255,255,0) 45%,rgba(0,0,0,0) 55%,#000 100%)"></div>
<div class="a" style="left:1034px;top:178px;width:9px;height:8px;background:#fff"></div>
<div class="a" style="left:1034px;top:186px;width:9px;height:7px;background:#000"></div>
<!-- ===== ADJUSTMENTS PANEL ===== -->
<div class="a panel" style="left:837px;top:199px;width:221px;height:121px"></div>
<div class="a tabrow" style="left:837px;top:199px;width:221px;height:18px"></div>
<div class="ptab on" style="left:837px;top:199px;width:74px">Adjustments</div>
<div class="ptab" style="left:911px;top:199px;width:43px">Styles</div>
<svg style="left:1042px;top:204px" width="13" height="8" shape-rendering="crispEdges"><path d="M0 1H5L2.500 4Z" fill="#d8d8d8"/><path d="M6 .5H13M6 2.500H13M6 4.500H13M6 6.500H13" stroke="#d8d8d8"/></svg>
<div class="t" style="left:846px;top:222px;font-size:11px;font-weight:bold;color:#f0f0f0;letter-spacing:-.15px">Add an adjustment</div>
<svg style="left:870px;top:236px" width="150" height="80" viewBox="870 236 150 80">
<defs>
<linearGradient id="ag" x1="0" y1="0" x2="0" y2="1"><stop offset="0" stop-color="#f0f0f0"/><stop offset="1" stop-color="#b8b8b8"/></linearGradient>
<linearGradient id="ah" x1="0" y1="0" x2="1" y2="0"><stop offset="0" stop-color="#3c3c3c"/><stop offset="1" stop-color="#e0e0e0"/></linearGradient>
<radialGradient id="av" cx=".5" cy=".3" r=".6"><stop offset="0" stop-color="#5a5a5a"/><stop offset="1" stop-color="#e4e4e4"/></radialGradient>
</defs>
<!-- row1: brightness -->
<circle cx="891.300" cy="248" r="4" fill="none" stroke="#e4e4e4" stroke-width="1.300"/><path d="M891.300 244A4 4 0 0 1 891.300 252Z" fill="#e4e4e4"/>
<path d="M891.300 239.500V242M891.300 254V256.500M882.800 248H885.300M897.300 248H899.800M885.300 242L887 243.700M895.600 252.300L897.300 254M897.300 242L895.600 243.700M887 252.300L885.300 254" stroke="#e4e4e4" stroke-width="1.500"/>
<!-- levels -->
<path d="M907 253V246L908.500 244L909.500 247L911 242.500L912.500 246.500L914 243L915.500 246L916.500 241.500L918 246L919.500 243L921 246.500L922.500 242.500L923.500 246L925 244.500V253Z" fill="url(#ag)"/>
<!-- curves -->
<rect x="932.500" y="241.500" width="15.500" height="13" fill="#6a6a6a" stroke="#dcdcdc" stroke-width="1"/><path d="M932.500 246H948M932.500 250H948M937.500 241.500V254.500M942.500 241.500V254.500" stroke="#c8c8c8" stroke-width=".8"/><path d="M933 254C940 253 940 243 947.500 242" fill="none" stroke="#f6f6f6" stroke-width="1.400"/>
<!-- exposure -->
<rect x="956.500" y="241.500" width="15.500" height="13" fill="#3e3e3e" stroke="#dcdcdc" stroke-width="1"/><path d="M957 254L971.500 242V254Z" fill="url(#ag)"/><path d="M958.500 245.500H963.500M961 243V248" stroke="#f0f0f0" stroke-width="1.200"/><path d="M965.500 251H970" stroke="#3e3e3e" stroke-width="1.300"/>
<!-- vibrance -->
<path d="M980 241.500H996L988 255.500Z" fill="url(#av)"/>
<!-- row2: hue/sat -->
<rect x="872" y="269" width="16" height="13" fill="url(#ah)" stroke="#dcdcdc" stroke-width="1"/><rect x="872.500" y="269.500" width="15" height="5.500" fill="#c8c8c8"/><path d="M875.500 269.500V275M879.500 269.500V275M883.500 269.500V275" stroke="#8c8c8c" stroke-width="1.600"/>
<!-- color balance -->
<path d="M903.500 267.500V271M897 271H910M897.500 271L895.500 278M897.500 271L899.500 278M909.500 271L907.500 278M909.500 271L911.500 278" stroke="#e4e4e4" stroke-width="1.200" fill="none"/><path d="M895 278H900.500C900.500 282.500 895 282.500 895 278ZM906.500 278H912C912 282.500 906.500 282.500 906.500 278Z" fill="url(#ag)"/><path d="M901.500 267.500H905.500L903.500 270.500Z" fill="#e4e4e4"/>
<!-- black & white -->
<rect x="920.500" y="269.500" width="15.500" height="12.500" fill="url(#ag)" stroke="#dcdcdc" stroke-width="1"/><rect x="921.500" y="270.500" width="6.500" height="10.500" fill="#484848"/>
<!-- photo filter -->
<path d="M943.500 270H946.500L947.500 268.500H953L954 270H957.500V278.500H943.500Z" fill="url(#ag)"/><circle cx="950.500" cy="274" r="2.800" fill="#7a7a7a" stroke="#4a4a4a" stroke-width=".8"/><circle cx="955" cy="278.500" r="4.800" fill="#a0a0a0" fill-opacity=".75" stroke="#e8e8e8" stroke-width="1.100"/>
<!-- channel mixer -->
<circle cx="975.200" cy="271.500" r="4.300" fill="#d8d8d8"/><circle cx="971.500" cy="277.800" r="4.300" fill="#d0d0d0"/><circle cx="979" cy="277.800" r="4.300" fill="#c4c4c4"/><path d="M972.500 273.500H978L975.800 276.500V280H974.700V276.500Z" fill="#4a4a4a"/>
<!-- color lookup -->
<rect x="992.500" y="269.500" width="15.500" height="12.500" fill="#dcdcdc"/><g fill="#7c7c7c"><rect x="993.500" y="270.500" width="3.800" height="2.800"/><rect x="998.300" y="270.500" width="3.800" height="2.800"/><rect x="1003.200" y="270.500" width="3.800" height="2.800"/><rect x="993.500" y="274.400" width="3.800" height="2.800" fill="#5c5c5c"/><rect x="998.300" y="274.400" width="3.800" height="2.800" fill="#5c5c5c"/><rect x="1003.200" y="274.400" width="3.800" height="2.800" fill="#5c5c5c"/><rect x="993.500" y="278.300" width="3.800" height="2.800" fill="#3c3c3c"/><rect x="998.300" y="278.300" width="3.800" height="2.800" fill="#3c3c3c"/><rect x="1003.200" y="278.300" width="3.800" height="2.800" fill="#3c3c3c"/></g>
<!-- row3: invert -->
<rect x="884.500" y="296" width="15.500" height="13" fill="#444" stroke="#dcdcdc" stroke-width="1"/><path d="M885 308.500L899.500 296.500V308.500Z" fill="url(#ag)"/><ellipse cx="892.300" cy="302.500" rx="3.800" ry="2.600" transform="rotate(-35 892.300 302.500)" fill="#6a6a6a" stroke="#dcdcdc" stroke-width=".6"/>
<!-- posterize -->
<rect x="908.500" y="296" width="15.500" height="13" fill="#6c6c6c" stroke="#dcdcdc" stroke-width="1"/><path d="M909 306L920 296.500H924V299.500L913 308.500H909Z" fill="#c4c4c4"/><path d="M909 302L915 296.500H917L909 304ZM924 303L917.500 308.500H921L924 306Z" fill="#a0a0a0"/>
<!-- threshold -->
<rect x="932.500" y="296" width="15.500" height="13" fill="#d8d8d8" stroke="#dcdcdc" stroke-width="1"/><path d="M933 308.500V304H936V301.500H939.500V299.500H943V297.500H947.500V299.500H945V302H941.500V304.500H938V306.500H947.500V308.500Z" fill="#3c3c3c"/>
<!-- selective color -->
<rect x="956.500" y="296" width="15.500" height="13" fill="#6a6a6a" stroke="#dcdcdc" stroke-width="1"/><path d="M957 296.500H971.500L964.200 302.500ZM957 308.500H971.500L964.200 302.500Z" fill="#d8d8d8"/>
<!-- gradient map -->
<rect x="980.500" y="296" width="15.500" height="13" fill="url(#ah)" stroke="#dcdcdc" stroke-width="1"/>
</svg>

<!-- ===== LAYERS PANEL ===== -->
<div class="a panel" style="left:837px;top:322px;width:221px;height:398px"></div>
<div class="a tabrow" style="left:837px;top:322px;width:221px;height:18px"></div>
<div class="ptab on" style="left:837px;top:322px;width:43px;letter-spacing:-.7px">Layers</div>
<div class="ptab" style="left:880px;top:322px;width:57px">Channels</div>
<div class="ptab" style="left:937px;top:322px;width:41px">Paths</div>
<svg style="left:1042px;top:327px" width="13" height="8" shape-rendering="crispEdges"><path d="M0 1H5L2.500 4Z" fill="#d8d8d8"/><path d="M6 .5H13M6 2.500H13M6 4.500H13M6 6.500H13" stroke="#d8d8d8"/></svg>
<!-- kind row -->
<div class="dd" style="left:842px;top:344px;width:69px;height:19px"></div>
<svg style="left:847px;top:348px" width="12" height="12" viewBox="0 0 12 12"><circle cx="7" cy="4.500" r="3.300" fill="none" stroke="#e8e8e8" stroke-width="1.400"/><path d="M4.500 7L1 10.500" stroke="#e8e8e8" stroke-width="1.800" stroke-linecap="round"/></svg>
<div class="t" style="left:863px;top:348px;font-size:10.5px;letter-spacing:-.2px">Kind</div>
<svg style="left:900px;top:349px" width="7" height="10"><path d="M0 3.800L3.500 0L7 3.800ZM0 6.200L3.500 10L7 6.200Z" fill="#e4e4e4"/></svg>
<svg style="left:920px;top:343px" width="138" height="20" viewBox="920 343 138 20">
<rect x="923.500" y="347.500" width="12.500" height="10.500" fill="#4a4a4a" stroke="#dcdcdc" stroke-width="1.200"/><path d="M925 356.500L928 353L930 355L932 353.500L934.500 356.500Z" fill="#dcdcdc"/><circle cx="932.500" cy="350.500" r="1.100" fill="#dcdcdc"/>
<circle cx="953" cy="352.600" r="5.200" fill="#4a4a4a" stroke="#dcdcdc" stroke-width="1.300"/><path d="M956.700 348.900A5.200 5.200 0 0 0 949.300 356.300Z" fill="#dcdcdc"/>
<rect x="996.500" y="348.500" width="9.500" height="8.500" fill="none" stroke="#dcdcdc" stroke-width="1.200"/><g fill="#535353" stroke="#dcdcdc" stroke-width="1"><rect x="995" y="347" width="3" height="3"/><rect x="1004.500" y="347" width="3" height="3"/><rect x="995" y="355.500" width="3" height="3"/><rect x="1004.500" y="355.500" width="3" height="3"/></g>
<path d="M1023.500 347H1028.500L1031.500 350V358.500H1023.500Z" fill="#5a5a5a" stroke="#dcdcdc" stroke-width="1.100"/><path d="M1028.500 347V350H1031.500" fill="none" stroke="#dcdcdc" stroke-width="1"/><rect x="1019.800" y="352.500" width="6.500" height="6.500" fill="#d0d0d0"/>
<rect x="1045.500" y="344.500" width="8.500" height="16.500" rx="1" fill="#3a3a3a" stroke="#2e2e2e"/><rect x="1046" y="345" width="7.500" height="8" rx="1" fill="#7a7a7a"/>
</svg>
<div class="t" style="left:971px;top:344px;font-family:'Liberation Serif',serif;font-size:16.5px;font-weight:bold;color:#e0e0e0;text-shadow:none">T</div>

<div class="a" style="left:837px;top:367px;width:221px;height:1px;background:#3e3e3e"></div>
<div class="a" style="left:837px;top:368px;width:221px;height:1px;background:#5c5c5c"></div>
<!-- blend row -->
<div class="dd" style="left:842px;top:372px;width:109px;height:18px"></div>
<div class="t" style="left:849px;top:375px;font-size:10.5px;letter-spacing:-.2px">Normal</div>
<svg style="left:940px;top:376px" width="7" height="10"><path d="M0 3.800L3.500 0L7 3.800ZM0 6.200L3.500 10L7 6.200Z" fill="#e4e4e4"/></svg>
<div class="t" style="left:959px;top:375px;font-size:10.5px;letter-spacing:-.25px">Opacity:</div>
<div class="vbox" style="left:1001px;top:372px;width:35px;height:18px;padding-left:5px">100%</div>
<div class="dd" style="left:1036px;top:372px;width:18px;height:18px;border-radius:0 3px 3px 0"></div>
<svg style="left:1041px;top:379px" width="7" height="4"><path d="M0 0H7L3.500 4Z" fill="#e4e4e4"/></svg>
<div class="a" style="left:837px;top:396px;width:221px;height:1px;background:#3e3e3e"></div>
<div class="a" style="left:837px;top:397px;width:221px;height:1px;background:#5c5c5c"></div>
<!-- lock row -->
<div class="t" style="left:843px;top:404px;font-size:10.5px;letter-spacing:-.25px">Lock:</div>
<svg style="left:874px;top:401px" width="82" height="16" viewBox="874 401 82 16">
<rect x="876" y="403.500" width="11" height="11" fill="#d4d4d4"/><g fill="#7c7c7c"><rect x="876" y="403.500" width="3.700" height="3.700"/><rect x="883.300" y="403.500" width="3.700" height="3.700"/><rect x="879.700" y="407.200" width="3.700" height="3.700"/><rect x="876" y="410.800" width="3.700" height="3.700"/><rect x="883.300" y="410.800" width="3.700" height="3.700"/></g>
<path d="M911.500 402.500L903.500 410.500" stroke="#e0e0e0" stroke-width="2" stroke-linecap="round"/><path d="M904 409C905.500 410.500 905 414 899.500 414.500C897 414.700 896 413.800 897 412.800C899.500 412 901 409.300 904 409Z" fill="#e0e0e0"/>
<path d="M925.700 403.500V413.700M920.500 408.600H931" stroke="#e0e0e0" stroke-width="1.200" fill="none"/><path d="M925.700 401.800L928 404.800H923.400ZM925.700 415.400L928 412.400H923.400ZM918.800 408.600L921.800 406.300V410.900ZM932.600 408.600L929.600 406.300V410.900Z" fill="#e0e0e0"/>
<rect x="943" y="408" width="10" height="7" rx=".8" fill="#dcdcdc"/><path d="M945 408V405.500C945 402.500 951 402.500 951 405.500V408" fill="none" stroke="#dcdcdc" stroke-width="1.600"/><rect x="947.300" y="410" width="1.500" height="3" fill="#555"/>
</svg>

<div class="t" style="left:981px;top:403px;font-size:10.5px;letter-spacing:-.25px">Fill:</div>
<div class="vbox" style="left:1001px;top:400px;width:35px;height:18px;padding-left:5px">100%</div>
<div class="dd" style="left:1036px;top:400px;width:18px;height:18px;border-radius:0 3px 3px 0"></div>
<svg style="left:1041px;top:407px" width="7" height="4"><path d="M0 0H7L3.500 4Z" fill="#e4e4e4"/></svg>
<!-- layer list -->
<div class="a" style="left:837px;top:424px;width:207px;height:277px;background:#484848"></div>
<div class="a" style="left:1044px;top:424px;width:14px;height:277px;background:#4f4f4f;border-left:1px solid #3c3c3c"></div>
<svg width="0" height="0" style="left:0;top:0"><defs><pattern id="ck" width="6" height="6" patternUnits="userSpaceOnUse"><rect width="6" height="6" fill="#fff"/><rect width="3" height="3" fill="#ccc"/><rect x="3" y="3" width="3" height="3" fill="#ccc"/></pattern></defs></svg>
<div class="a" style="left:868px;top:425px;width:176px;height:29px;background:#6c7c95"></div>
<div class="a" style="left:837px;top:425px;width:30px;height:29px;background:#535353"></div>
<div class="a" style="left:867px;top:425px;width:1px;height:29px;background:#3a3a3a"></div>
<div class="a" style="left:837px;top:454px;width:207px;height:1px;background:#3a3a3a"></div>
<svg style="left:846px;top:435px" width="13" height="9" viewBox="0 0 13 9"><path d="M.2 4.500C2.500 -.6 10.500 -.6 12.800 4.500C10.500 9.600 2.500 9.600 .2 4.500Z" fill="#e6e6e6"/><circle cx="6.500" cy="4.500" r="2.900" fill="#454545"/><circle cx="6.500" cy="4.500" r="1.300" fill="#e6e6e6"/></svg>
<svg style="left:871px;top:428px" width="32" height="23" viewBox="0 0 32 23"><rect x=".5" y=".5" width="31" height="22" fill="#000" stroke="#000"/><rect x="1" y="1" width="30" height="21" fill="url(#ck)"/><path d="M19 6C20.500 4.500 22.500 5 22.800 7L22.500 9.500L24 8.500L25 9.500L23 12L23.500 19H17.500L18 13L17 11.500L18.500 10Z" fill="#efe6e6"/><circle cx="20.600" cy="7" r="2" fill="#4a3028"/><circle cx="20.800" cy="8.200" r="1.500" fill="#e0a888"/><path d="M18.500 16H22.500" stroke="#d8343c" stroke-width="1.200"/></svg>
<div class="t" style="left:913px;top:435px;font-size:11px;color:#f2f2f2;letter-spacing:-.45px">Layer 2</div>
<div class="a" style="left:868px;top:455px;width:176px;height:29px;background:#6c7c95"></div>
<div class="a" style="left:837px;top:455px;width:30px;height:29px;background:#535353"></div>
<div class="a" style="left:867px;top:455px;width:1px;height:29px;background:#3a3a3a"></div>
<div class="a" style="left:837px;top:484px;width:207px;height:1px;background:#3a3a3a"></div>
<svg style="left:846px;top:465px" width="13" height="9" viewBox="0 0 13 9"><path d="M.2 4.500C2.500 -.6 10.500 -.6 12.800 4.500C10.500 9.600 2.500 9.600 .2 4.500Z" fill="#e6e6e6"/><circle cx="6.500" cy="4.500" r="2.900" fill="#454545"/><circle cx="6.500" cy="4.500" r="1.300" fill="#e6e6e6"/></svg>
<svg style="left:871px;top:458px" width="32" height="23" viewBox="0 0 32 23"><rect x=".5" y=".5" width="31" height="22" fill="#000" stroke="#000"/><rect x="1" y="1" width="30" height="21" fill="url(#ck)"/><path d="M8.500 7C9.500 4.500 12.500 4.500 13.500 7L14 11L17 12V17.500H7.500V12.500L8.500 11Z" fill="#2c2d47"/><path d="M8.500 7C9.500 4 13 4.500 13.500 7L14 12H12.500L12 9H10L9.500 13H7.800Z" fill="#6e4328"/><circle cx="11" cy="8.200" r="1.700" fill="#e4b293"/></svg>
<div class="t" style="left:913px;top:465px;font-size:11px;color:#f2f2f2;letter-spacing:-.45px">Layer 1</div>
<div class="a" style="left:868px;top:485px;width:176px;height:29px;background:#535353"></div>
<div class="a" style="left:837px;top:485px;width:30px;height:29px;background:#535353"></div>
<div class="a" style="left:867px;top:485px;width:1px;height:29px;background:#3a3a3a"></div>
<div class="a" style="left:837px;top:514px;width:207px;height:1px;background:#3a3a3a"></div>
<svg style="left:846px;top:495px" width="13" height="9" viewBox="0 0 13 9"><path d="M.2 4.500C2.500 -.6 10.500 -.6 12.800 4.500C10.500 9.600 2.500 9.600 .2 4.500Z" fill="#e6e6e6"/><circle cx="6.500" cy="4.500" r="2.900" fill="#454545"/><circle cx="6.500" cy="4.500" r="1.300" fill="#e6e6e6"/></svg>
<svg style="left:871px;top:488px" width="32" height="23" viewBox="0 0 32 23"><rect x=".5" y=".5" width="31" height="22" fill="#000" stroke="#000"/><rect x="1" y="1" width="30" height="21" fill="#fafa9c"/></svg>
<div class="t" style="left:913px;top:495px;font-size:11px;color:#f2f2f2;letter-spacing:-.45px">Layer 3</div>
<div class="a" style="left:868px;top:515px;width:176px;height:29px;background:#535353"></div>
<div class="a" style="left:837px;top:515px;width:30px;height:29px;background:#535353"></div>
<div class="a" style="left:867px;top:515px;width:1px;height:29px;background:#3a3a3a"></div>
<div class="a" style="left:837px;top:544px;width:207px;height:1px;background:#3a3a3a"></div>
<div class="a" style="left:846px;top:523px;width:12px;height:12px;border:1px solid #3c3c3c;background:#555;box-shadow:1px 1px 0 #646464"></div>
<svg style="left:871px;top:518px" width="32" height="23" viewBox="0 0 32 23"><rect x=".5" y=".5" width="31" height="22" fill="#000" stroke="#000"/><rect x="1" y="1" width="30" height="21" fill="#e9e3da"/><path d="M11 5C12 3 14.500 3.500 14.800 5.500L15 8L17.500 9.500V20H10V11L10.500 8Z" fill="#2c2d47"/><path d="M11 5C12 2.800 14.500 3.200 14.800 5.500L15.200 9H14L13.500 7H12L11.800 10H10.500Z" fill="#5a3826"/><circle cx="13" cy="6" r="1.400" fill="#e4b293"/><path d="M10 19L10.500 22M15.500 19L16 22" stroke="#e0a888" stroke-width="1.400"/><rect x="19" y="11" width="12" height="11" fill="#4a4a4a"/><path d="M23 12.500H27.500L30 15V21H23Z" fill="#5a5a5a" stroke="#e8e8e8" stroke-width=".9"/><rect x="20.500" y="16.500" width="5" height="5" fill="#e0e0e0"/></svg>
<div class="t" style="left:913px;top:525px;font-size:11px;color:#f2f2f2;letter-spacing:-.45px">How to feather in Photo...</div>
<div class="a" style="left:868px;top:545px;width:176px;height:29px;background:#535353"></div>
<div class="a" style="left:837px;top:545px;width:30px;height:29px;background:#535353"></div>
<div class="a" style="left:867px;top:545px;width:1px;height:29px;background:#3a3a3a"></div>
<div class="a" style="left:837px;top:574px;width:207px;height:1px;background:#3a3a3a"></div>
<div class="a" style="left:846px;top:553px;width:12px;height:12px;border:1px solid #3c3c3c;background:#555;box-shadow:1px 1px 0 #646464"></div>
<svg style="left:871px;top:548px" width="32" height="23" viewBox="0 0 32 23"><rect x=".5" y=".5" width="31" height="22" fill="#000" stroke="#000"/><rect x="1" y="1" width="30" height="21" fill="#8cc57c"/><rect x="25" y="1" width="6" height="21" fill="#9c2232"/><path d="M13.500 6.500C14.500 4.500 16.500 5 16.800 7L16.500 9L18 8.500L18.500 10L17.500 12L18 22H12L12.500 13L11.500 11.500L13 10Z" fill="#f2eeee"/><circle cx="15" cy="6.500" r="1.900" fill="#3a2a22"/><circle cx="15.200" cy="7.800" r="1.300" fill="#e0a888"/><path d="M14 7H16.500" stroke="#2050c0" stroke-width="1"/><path d="M13.500 15.500H16.500" stroke="#d8343c" stroke-width="1.200"/></svg>
<div class="t" style="left:913px;top:555px;font-size:11px;color:#f2f2f2;letter-spacing:-.45px">Layer 0</div>
<div class="a" style="left:837px;top:424px;width:221px;height:1px;background:#3a3a3a"></div>
<!-- bottom bar -->
<div class="a" style="left:837px;top:701px;width:221px;height:19px;background:#535353;border-top:1px solid #383838"></div>
<svg style="left:837px;top:702px" width="221" height="18" viewBox="837 702 221 18">
<defs><linearGradient id="bg2" x1="0" y1="0" x2="0" y2="1"><stop offset="0" stop-color="#f0f0f0"/><stop offset="1" stop-color="#b4b4b4"/></linearGradient></defs>
<!-- link -->
<rect x="856.800" y="708.300" width="8" height="6" rx="3" fill="none" stroke="#ececec" stroke-width="1.600"/><rect x="861.500" y="708.300" width="8" height="6" rx="3" fill="none" stroke="#ececec" stroke-width="1.600"/><path d="M860.500 711.300H866" stroke="#ececec" stroke-width="1.600"/>
<!-- mask -->
<rect x="911" y="707" width="13" height="9.500" fill="#8c8c8c"/><circle cx="917.500" cy="711.800" r="2.600" fill="#5c5c5c"/>
<!-- adjustment -->
<circle cx="943.500" cy="711" r="5" fill="#555" stroke="#e4e4e4" stroke-width="1.300"/><path d="M947 707.500A5 5 0 0 0 940 714.500Z" fill="#e4e4e4"/><path d="M951 715.500H954.500L952.750 717.500Z" fill="#dcdcdc"/>
<!-- folder -->
<path d="M965 707.500C965 706.500 965.500 706 966.500 706H970L971 707.500H976.500V716H965Z" fill="url(#bg2)"/>
<!-- new layer -->
<path d="M993 706.500H1002.500V716H997L993 712Z" fill="url(#bg2)"/><path d="M992.500 711.500H997.500V716.500Z" fill="#535353"/><path d="M993.500 712.500H996.800V715.800Z" fill="#dcdcdc"/>
<!-- trash -->
<path d="M1019.500 709H1029.500M1022.500 708.500V707H1026.500V708.500" stroke="#e4e4e4" stroke-width="1.300" fill="none"/><path d="M1020.500 710H1028.500L1027.800 717H1021.200Z" fill="none" stroke="#e4e4e4" stroke-width="1.200"/><path d="M1023 711V716M1024.500 711V716M1026 711V716" stroke="#e4e4e4" stroke-width=".8"/>
</svg>
<div class="t" style="left:884px;top:704px;font-family:'Liberation Serif',serif;font-style:italic;font-size:15px;color:#8a8a8a;text-shadow:none;letter-spacing:-.5px">fx</div>
<svg style="left:897px;top:716px" width="4" height="3"><path d="M0 0H3.500L1.750 2Z" fill="#777"/></svg>

<!-- cursor -->
<svg style="left:783px;top:393px" width="13" height="21" viewBox="0 0 13 21"><path d="M1 1V16.500L4.600 13L7.400 19.500L9.800 18.500L7 12.200H12Z" fill="#fff" stroke="#000" stroke-width="1" stroke-linejoin="round"/></svg>

</body>
</html>
